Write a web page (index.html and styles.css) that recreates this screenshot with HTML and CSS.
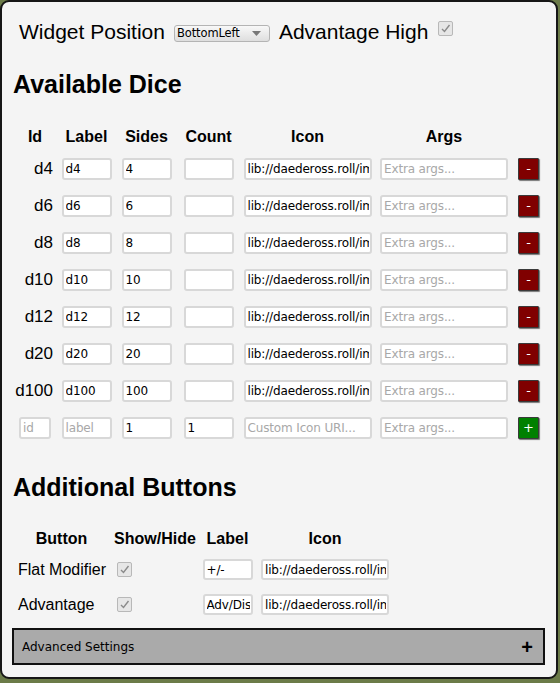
FILE: index.html
```html
<!DOCTYPE html>
<html>
<head>
<meta charset="utf-8">
<link rel="stylesheet" href="styles.css">
</head>
<body>
<div class="panel">
  <div class="top">
    <span class="big">Widget Position</span>
    <div class="select"><span>BottomLeft</span><svg class="arrow" width="9" height="5" viewBox="0 0 9 5"><path d="M0 0H9L4.5 5Z" fill="#777"/></svg></div>
    <span class="big">Advantage High</span>
    <span class="check top-check"><svg width="13" height="13" viewBox="0 0 13 13"><path d="M3 7 L5.5 9.5 L10.5 3" fill="none" stroke="#8a8a8a" stroke-width="1.4"/></svg></span>
  </div>

  <h2>Available Dice</h2>
  <div class="dice">
    <div class="hd">Id</div><div class="hd">Label</div><div class="hd">Sides</div><div class="hd">Count</div><div class="hd">Icon</div><div class="hd">Args</div><div class="hd"></div>

    <div class="id">d4</div><div class="c"><input class="w50" value="d4"></div><div class="c"><input class="w50" value="4"></div><div class="c"><input class="w50" value=""></div><div class="c"><input class="w128" value="lib://daedeross.roll/img/d4.png"></div><div class="c"><input class="w128" placeholder="Extra args..."></div><div class="c"><span class="btn del">-</span></div>

    <div class="id">d6</div><div class="c"><input class="w50" value="d6"></div><div class="c"><input class="w50" value="6"></div><div class="c"><input class="w50" value=""></div><div class="c"><input class="w128" value="lib://daedeross.roll/img/d6.png"></div><div class="c"><input class="w128" placeholder="Extra args..."></div><div class="c"><span class="btn del">-</span></div>

    <div class="id">d8</div><div class="c"><input class="w50" value="d8"></div><div class="c"><input class="w50" value="8"></div><div class="c"><input class="w50" value=""></div><div class="c"><input class="w128" value="lib://daedeross.roll/img/d8.png"></div><div class="c"><input class="w128" placeholder="Extra args..."></div><div class="c"><span class="btn del">-</span></div>

    <div class="id">d10</div><div class="c"><input class="w50" value="d10"></div><div class="c"><input class="w50" value="10"></div><div class="c"><input class="w50" value=""></div><div class="c"><input class="w128" value="lib://daedeross.roll/img/d10.png"></div><div class="c"><input class="w128" placeholder="Extra args..."></div><div class="c"><span class="btn del">-</span></div>

    <div class="id">d12</div><div class="c"><input class="w50" value="d12"></div><div class="c"><input class="w50" value="12"></div><div class="c"><input class="w50" value=""></div><div class="c"><input class="w128" value="lib://daedeross.roll/img/d12.png"></div><div class="c"><input class="w128" placeholder="Extra args..."></div><div class="c"><span class="btn del">-</span></div>

    <div class="id">d20</div><div class="c"><input class="w50" value="d20"></div><div class="c"><input class="w50" value="20"></div><div class="c"><input class="w50" value=""></div><div class="c"><input class="w128" value="lib://daedeross.roll/img/d20.png"></div><div class="c"><input class="w128" placeholder="Extra args..."></div><div class="c"><span class="btn del">-</span></div>

    <div class="id">d100</div><div class="c"><input class="w50" value="d100"></div><div class="c"><input class="w50" value="100"></div><div class="c"><input class="w50" value=""></div><div class="c"><input class="w128" value="lib://daedeross.roll/img/d100.png"></div><div class="c"><input class="w128" placeholder="Extra args..."></div><div class="c"><span class="btn del">-</span></div>

    <div class="c"><input class="w32" placeholder="id"></div><div class="c"><input class="w50" placeholder="label"></div><div class="c"><input class="w50" value="1"></div><div class="c"><input class="w50" value="1"></div><div class="c"><input class="w128" placeholder="Custom Icon URI..."></div><div class="c"><input class="w128" placeholder="Extra args..."></div><div class="c"><span class="btn add">+</span></div>
  </div>

  <h2 class="h2b">Additional Buttons</h2>
  <div class="extra">
    <div class="hd">Button</div><div class="hd">Show/Hide</div><div class="hd">Label</div><div class="hd">Icon</div>

    <div class="name">Flat Modifier</div><div class="show"><span class="check"><svg width="13" height="13" viewBox="0 0 13 13"><path d="M3 7 L5.5 9.5 L10.5 3" fill="none" stroke="#8a8a8a" stroke-width="1.4"/></svg></span></div><div class="c"><input class="w50 sm" value="+/-"></div><div class="c"><input class="w128 sm" value="lib://daedeross.roll/img/mod.png"></div>

    <div class="name">Advantage</div><div class="show"><span class="check"><svg width="13" height="13" viewBox="0 0 13 13"><path d="M3 7 L5.5 9.5 L10.5 3" fill="none" stroke="#8a8a8a" stroke-width="1.4"/></svg></span></div><div class="c"><input class="w50 sm" value="Adv/Dis"></div><div class="c"><input class="w128 sm" value="lib://daedeross.roll/img/adv.png"></div>
  </div>

  <div class="advanced"><span>Advanced Settings</span><span class="plus">+</span></div>
</div>
</body>
</html>
```

FILE: styles.css
```css
html, body {
  margin: 0;
  padding: 0;
}
body {
  width: 560px;
  height: 683px;
  background: #6b7b48;
  font-family: "Liberation Sans", Arial, sans-serif;
  color: #000;
  overflow: hidden;
}
.panel {
  box-sizing: border-box;
  width: 558px;
  height: 679px;
  background: #f4f4f4;
  border: 2px solid #161616;
  border-radius: 9px;
  padding: 18px 12px 0 12px;
}
.top {
  display: flex;
  align-items: center;
  height: 24px;
  padding-left: 5px;
}
.big {
  font-size: 21px;
  line-height: 24px;
}
.select {
  box-sizing: border-box;
  width: 96px;
  height: 17px;
  margin: 2px 9px 0 9px;
  border: 1px solid #b4b4b4;
  border-radius: 3px;
  background: linear-gradient(#f8f8f8, #dedede);
  display: flex;
  align-items: center;
  justify-content: space-between;
  padding: 0 8px 0 2px;
  font-family: "DejaVu Sans", Verdana, sans-serif;
  font-size: 11.5px;
  letter-spacing: -0.1px;
}
.arrow {
  display: block;
}
.check {
  box-sizing: border-box;
  display: inline-flex;
  align-items: center;
  justify-content: center;
  width: 15px;
  height: 15px;
  border: 1px solid #b8b8b8;
  border-radius: 2px;
  background: #e6e6e6;
}
.top-check {
  margin-left: 10px;
  margin-top: -7px;
}
h2 {
  margin: 26px 0 0 -1px;
  font-size: 25px;
  line-height: 29px;
  font-weight: bold;
}
h2.h2b {
  margin-top: 27px;
}
.dice {
  display: grid;
  grid-template-columns: 42px 61px 59px 65px 133px 140px 29px;
  grid-template-rows: 26px repeat(8, 37px);
  margin-top: 25px;
}
.extra {
  display: grid;
  grid-template-columns: 95px 92px 53px 142px;
  grid-template-rows: 26px repeat(2, 35px);
  margin-top: 24px;
}
.hd {
  font-weight: bold;
  font-size: 16px;
  display: flex;
  align-items: center;
  justify-content: center;
}
.id {
  font-size: 17px;
  display: flex;
  align-items: center;
  justify-content: flex-end;
  padding-right: 3px;
}
.c {
  display: flex;
  align-items: center;
  justify-content: center;
}
.name {
  font-size: 16px;
  display: flex;
  align-items: center;
  padding-left: 4px;
}
.show {
  display: flex;
  align-items: center;
  padding-left: 8px;
}
input {
  box-sizing: border-box;
  height: 22px;
  margin: 0;
  padding: 1px 1px 0 2px;
  border: 2px solid #d8d8d8;
  border-radius: 3px;
  background: #fff;
  font-family: "DejaVu Sans", Verdana, sans-serif;
  font-size: 12px;
  letter-spacing: -0.15px;
  color: #000;
  outline: none;
}
input::placeholder {
  color: #a8a8a8;
}
input.sm {
  height: 21px;
}
.w32 { width: 32px; }
.w50 { width: 50px; }
.w128 { width: 128px; }
.btn {
  box-sizing: border-box;
  width: 21px;
  height: 22px;
  display: flex;
  align-items: center;
  justify-content: center;
  color: #fff;
  font-family: "DejaVu Sans", Verdana, sans-serif;
  font-size: 13px;
  border: 1px solid #3a3a3a;
  box-shadow: 1px 1px 1px #777;
  border-radius: 1px;
}
.del { background: #800000; }
.add { background: #008000; }
.advanced {
  box-sizing: border-box;
  width: 533px;
  height: 37px;
  margin: 6px 0 0 -2px;
  background: #aaaaaa;
  border: 2px solid #111;
  display: flex;
  align-items: center;
  justify-content: space-between;
  padding: 0 10px 0 8px;
  font-family: "DejaVu Sans", Verdana, sans-serif;
  font-size: 12px;
}
.plus {
  font-family: "Liberation Sans", Arial, sans-serif;
  font-size: 20px;
  font-weight: bold;
  line-height: 1;
}
```
